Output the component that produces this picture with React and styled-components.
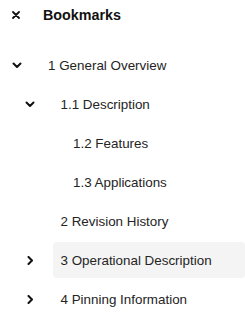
import React from 'react';
import styled, { createGlobalStyle } from 'styled-components';

const GlobalStyle = createGlobalStyle`
  body {
    margin: 0;
    background: #ffffff;
    font-family: "Liberation Sans", Arial, sans-serif;
    color: #242424;
  }
`;

const Panel = styled.div`
  width: 245px;
  height: 319px;
  display: flex;
  flex-direction: column;
  overflow: hidden;
`;

const Header = styled.div`
  display: flex;
  align-items: center;
  height: 30px;
  margin-bottom: 17px;
`;

const CloseButton = styled.button`
  width: 43px;
  height: 30px;
  padding: 0 0 0 12px;
  border: 0;
  background: none;
  display: flex;
  align-items: center;
  cursor: pointer;
`;

const Title = styled.h2`
  margin: 0;
  font-size: 14.3px;
  font-weight: 700;
  color: #111111;
`;

const Tree = styled.ul`
  list-style: none;
  margin: 0;
  padding: 0;
  display: flex;
  flex-direction: column;
  gap: 3px;
`;

const Row = styled.li`
  display: flex;
  align-items: center;
  height: 36px;
  padding-left: ${p => p.$level * 12.5}px;
`;

const Toggle = styled.span`
  width: 40px;
  flex: none;
  padding-left: 12px;
  box-sizing: border-box;
  display: flex;
  align-items: center;
`;

const Label = styled.span`
  flex: 1;
  height: 36px;
  display: flex;
  align-items: center;
  padding-left: 8px;
  border-radius: 4px;
  font-size: 13.4px;
  white-space: nowrap;
  background: ${p => (p.$active ? '#f4f4f4' : 'transparent')};
`;

const CloseIcon = () => (
  <svg width="8" height="8" viewBox="0 0 8 8">
    <path d="M1 1L7 7M7 1L1 7" stroke="#111" strokeWidth="1.8" strokeLinecap="round" />
  </svg>
);

const Chevron = ({ open }) =>
  open ? (
    <svg width="10" height="7" viewBox="0 0 10 7">
      <polyline points="1.5,1.5 5,5 8.5,1.5" fill="none" stroke="#111" strokeWidth="2" strokeLinecap="round" strokeLinejoin="round" />
    </svg>
  ) : (
    <svg width="10" height="9" viewBox="0 0 10 9">
      <polyline points="3.5,1 7,4.5 3.5,8" fill="none" stroke="#111" strokeWidth="2" strokeLinecap="round" strokeLinejoin="round" />
    </svg>
  );

const bookmarks = [
  { title: '1 General Overview', level: 0, toggle: 'open' },
  { title: '1.1 Description', level: 1, toggle: 'open' },
  { title: '1.2 Features', level: 2 },
  { title: '1.3 Applications', level: 2 },
  { title: '2 Revision History', level: 1 },
  { title: '3 Operational Description', level: 1, toggle: 'closed', active: true },
  { title: '4 Pinning Information', level: 1, toggle: 'closed' },
];

export default function App() {
  return (
    <>
      <GlobalStyle />
      <Panel>
        <Header>
          <CloseButton aria-label="Close">
            <CloseIcon />
          </CloseButton>
          <Title>Bookmarks</Title>
        </Header>
        <Tree>
          {bookmarks.map(b => (
            <Row key={b.title} $level={b.level}>
              <Toggle>{b.toggle && <Chevron open={b.toggle === 'open'} />}</Toggle>
              <Label $active={b.active}>{b.title}</Label>
            </Row>
          ))}
        </Tree>
      </Panel>
    </>
  );
}
